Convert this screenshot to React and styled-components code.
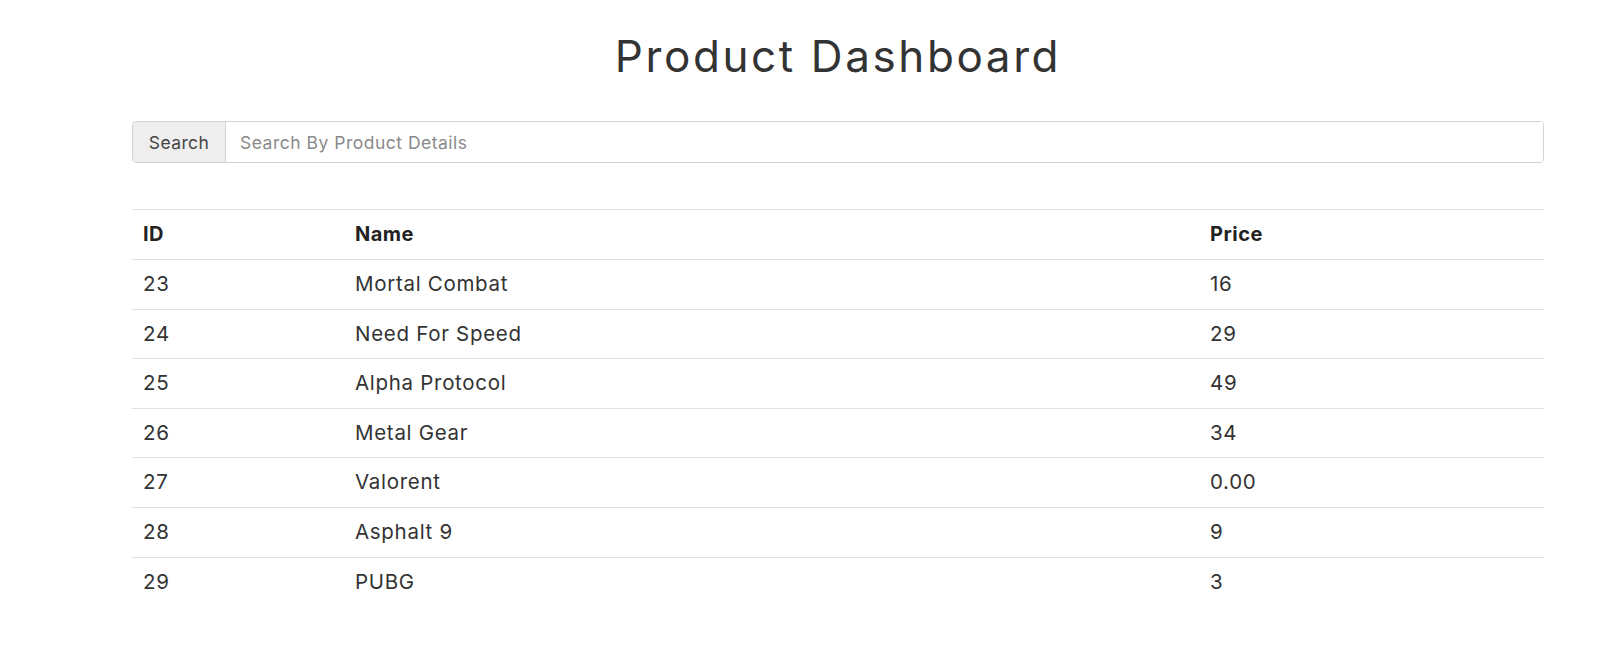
import React from "react";
import styled, { createGlobalStyle } from "styled-components";

const Global = createGlobalStyle`
  html, body { margin: 0; padding: 0; background: #fff; }
  body {
    font-family: Inter, "Open Sans", sans-serif;
    color: #333;
  }
  * { box-sizing: border-box; }
`;

const Page = styled.div`
  padding: 0 69px 0 132px;
`;

const Title = styled.h1`
  margin: 0;
  padding-top: 28px;
  height: 121px;
  text-align: center;
  font-weight: 400;
  font-size: 44px;
  letter-spacing: 2.6px;
  line-height: 56px;
  color: #333;
`;

const SearchGroup = styled.div`
  display: flex;
  height: 42px;
  border: 1px solid #ced4da;
  border-radius: 4px;
  overflow: hidden;
`;

const Addon = styled.span`
  display: flex;
  align-items: center;
  justify-content: center;
  width: 93px;
  background: #eeeeee;
  border-right: 1px solid #ced4da;
  font-size: 17.5px;
  letter-spacing: 0.4px;
  color: #444;
`;

const SearchInput = styled.input`
  flex: 1;
  border: none;
  outline: none;
  padding: 0 14px;
  font-family: inherit;
  font-size: 17.5px;
  letter-spacing: 0.5px;
  color: #333;
  &::placeholder { color: #8a8a8a; }
`;

const Table = styled.table`
  width: 100%;
  margin-top: 46px;
  border-collapse: collapse;
  table-layout: fixed;
`;

const Th = styled.th`
  text-align: left;
  font-weight: 700;
  font-size: 20px;
  letter-spacing: 0.5px;
  padding: 12px 11px;
  line-height: 25px;
  border-top: 1px solid #dee2e6;
  color: #222;
  width: ${(p) => p.$w || "auto"};
`;

const Td = styled.td`
  text-align: left;
  font-size: 20.5px;
  letter-spacing: 0.7px;
  padding: 12px 11px;
  line-height: 24.6px;
  border-top: 1px solid #dee2e6;
  color: #333;
`;

const rows = [
  [23, "Mortal Combat", "16"],
  [24, "Need For Speed", "29"],
  [25, "Alpha Protocol", "49"],
  [26, "Metal Gear", "34"],
  [27, "Valorent", "0.00"],
  [28, "Asphalt 9", "9"],
  [29, "PUBG", "3"],
];

export default function App() {
  return (
    <>
      <Global />
      <Page>
        <Title>Product Dashboard</Title>
        <SearchGroup>
          <Addon>Search</Addon>
          <SearchInput placeholder="Search By Product Details" />
        </SearchGroup>
        <Table>
          <thead>
            <tr>
              <Th $w="212px">ID</Th>
              <Th $w="855px">Name</Th>
              <Th>Price</Th>
            </tr>
          </thead>
          <tbody>
            {rows.map(([id, name, price]) => (
              <tr key={id}>
                <Td>{id}</Td>
                <Td>{name}</Td>
                <Td>{price}</Td>
              </tr>
            ))}
          </tbody>
        </Table>
      </Page>
    </>
  );
}
